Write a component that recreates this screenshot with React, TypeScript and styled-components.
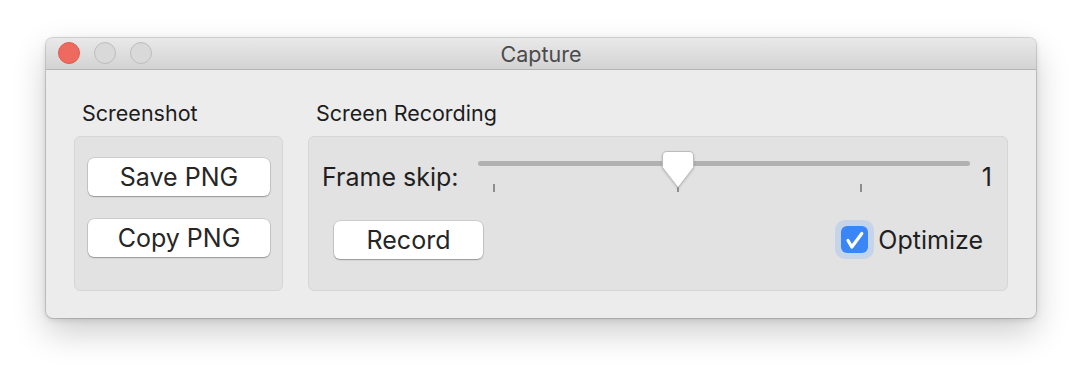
import React from 'react'
import styled, { createGlobalStyle } from 'styled-components'

const GlobalStyle = createGlobalStyle`
  html, body {
    margin: 0;
    padding: 0;
    background: #ffffff;
  }
  body {
    font-family: Inter, "Liberation Sans", sans-serif;
    -webkit-font-smoothing: antialiased;
  }
`

const Page = styled.div`
  width: 1082px;
  height: 372px;
  padding: 38px 0 0 46px;
  box-sizing: border-box;
`

const Window = styled.div`
  width: 990px;
  height: 280px;
  border-radius: 7px;
  overflow: hidden;
  background: #ececec;
  box-shadow: 0 14px 34px rgba(0, 0, 0, .2), 0 2px 6px rgba(0, 0, 0, .12), 0 0 0 1px rgba(0, 0, 0, .14);
  display: flex;
  flex-direction: column;
`

const TitleBar = styled.div`
  position: relative;
  height: 31px;
  flex: none;
  display: flex;
  align-items: center;
  justify-content: center;
  padding: 0 12px;
  background: linear-gradient(#e9e9e9, #d3d3d3);
  border-bottom: 1px solid #b4b4b4;
`

const Lights = styled.div`
  position: absolute;
  left: 12px;
  top: 4px;
  display: flex;
  gap: 14px;
`

const Light = styled.span<{ $color: string; $border: string }>`
  width: 22px;
  height: 22px;
  border-radius: 50%;
  box-sizing: border-box;
  background: ${p => p.$color};
  border: 1px solid ${p => p.$border};
`

const Title = styled.div`
  font-size: 21.5px;
  color: #4b4b4b;
`

const Body = styled.div`
  flex: 1;
  display: flex;
  gap: 25px;
  padding: 30px 28px 0 28px;
`

const Group = styled.div<{ $width: number }>`
  width: ${p => p.$width}px;
  display: flex;
  flex-direction: column;
  gap: 10px;
`

const GroupLabel = styled.div`
  font-size: 21.5px;
  line-height: 26px;
  color: #1c1c1c;
  padding-left: 8px;
`

const Box = styled.div`
  height: 155px;
  box-sizing: border-box;
  background: #e2e2e2;
  border: 1px solid #d6d6d6;
  border-radius: 6px;
`

const ButtonStack = styled(Box)`
  display: flex;
  flex-direction: column;
  gap: 23px;
  padding: 21px 12px 0 13px;
`

const Button = styled.button<{ $width?: number }>`
  height: 38px;
  width: ${p => (p.$width ? `${p.$width}px` : '100%')};
  border: none;
  border-radius: 6px;
  background: #ffffff;
  box-shadow: 0 0 0 .5px rgba(0, 0, 0, .18), 0 1px 1.5px rgba(0, 0, 0, .28);
  font-family: Inter, "Liberation Sans", sans-serif;
  font-size: 25px;
  color: #262626;
  padding: 0;
`

const RecordBox = styled(Box)`
  display: flex;
  flex-direction: column;
  gap: 28px;
  padding: 13px 15px 0 13px;
`

const SliderRow = styled.div`
  display: flex;
  align-items: flex-end;
  height: 42px;
`

const RowText = styled.span`
  font-size: 25px;
  line-height: 30px;
  color: #1f1f1f;
  white-space: nowrap;
`

const FrameLabel = styled(RowText)`
  margin-right: 20px;
`

const Value = styled(RowText)`
  margin-left: 12px;
`

const Slider = styled.div`
  position: relative;
  flex: 1;
  height: 42px;
`

const Track = styled.div`
  position: absolute;
  left: 0;
  right: 0;
  top: 11px;
  height: 5px;
  border-radius: 3px;
  background: #b1b1b1;
`

const Tick = styled.span`
  position: absolute;
  top: 34px;
  width: 2px;
  height: 8px;
  margin-left: -1px;
  background: #8e8e8e;
`

const Thumb = styled.svg`
  position: absolute;
  top: 1px;
  margin-left: -16px;
  filter: drop-shadow(0 1px 1px rgba(0, 0, 0, .18));
`

const ActionRow = styled.div`
  display: flex;
  align-items: center;
  justify-content: space-between;
  height: 39px;
  padding: 0 9px 0 12px;
`

const CheckLabel = styled.label`
  display: flex;
  align-items: center;
  gap: 4px;
`

const CheckRing = styled.span`
  width: 39px;
  height: 39px;
  box-sizing: border-box;
  border-radius: 10px;
  background: #c5d4e9;
  display: flex;
  align-items: center;
  justify-content: center;
`

const CheckBox = styled.span`
  width: 27px;
  height: 27px;
  border-radius: 6px;
  background: #3b86f7;
  display: flex;
`

const SLIDER_WIDTH = 490
const THUMB_INSET = 16
const MAX = 2.5
const value = 1
const ticks = [0, 1, 2]

const pos = (v: number) => THUMB_INSET + (v / MAX) * (SLIDER_WIDTH - THUMB_INSET * 2)

const App = () => {
  return (
    <Page>
      <GlobalStyle />
      <Window>
        <TitleBar>
          <Lights>
            <Light $color="#ee6a5f" $border="#e05a4e" />
            <Light $color="#d9d9d9" $border="#bdbdbd" />
            <Light $color="#d9d9d9" $border="#bdbdbd" />
          </Lights>
          <Title>Capture</Title>
        </TitleBar>
        <Body>
          <Group $width={209}>
            <GroupLabel>Screenshot</GroupLabel>
            <ButtonStack>
              <Button>Save PNG</Button>
              <Button>Copy PNG</Button>
            </ButtonStack>
          </Group>
          <Group $width={700}>
            <GroupLabel>Screen Recording</GroupLabel>
            <RecordBox>
              <SliderRow>
                <FrameLabel>Frame skip:</FrameLabel>
                <Slider>
                  <Track />
                  {ticks.map(t => (
                    <Tick key={t} style={{ left: pos(t) }} />
                  ))}
                  <Thumb width="32" height="38" viewBox="0 0 32 38" style={{ left: pos(value) }}>
                    <path
                      d="M5 .5H27Q31.5 .5 31.5 5V16.5L16 36.5L.5 16.5V5Q.5 .5 5 .5Z"
                      fill="#ffffff"
                      stroke="#bcbcbc"
                    />
                  </Thumb>
                </Slider>
                <Value>{value}</Value>
              </SliderRow>
              <ActionRow>
                <Button $width={149}>Record</Button>
                <CheckLabel>
                  <CheckRing>
                    <CheckBox>
                      <svg width="27" height="27" viewBox="0 0 27 27">
                        <path
                          d="M7 14.5L10.8 21L20.8 7.5"
                          fill="none"
                          stroke="#ffffff"
                          strokeWidth="3.2"
                          strokeLinecap="round"
                          strokeLinejoin="round"
                        />
                      </svg>
                    </CheckBox>
                  </CheckRing>
                  <RowText>Optimize</RowText>
                </CheckLabel>
              </ActionRow>
            </RecordBox>
          </Group>
        </Body>
      </Window>
    </Page>
  )
}

export default App
